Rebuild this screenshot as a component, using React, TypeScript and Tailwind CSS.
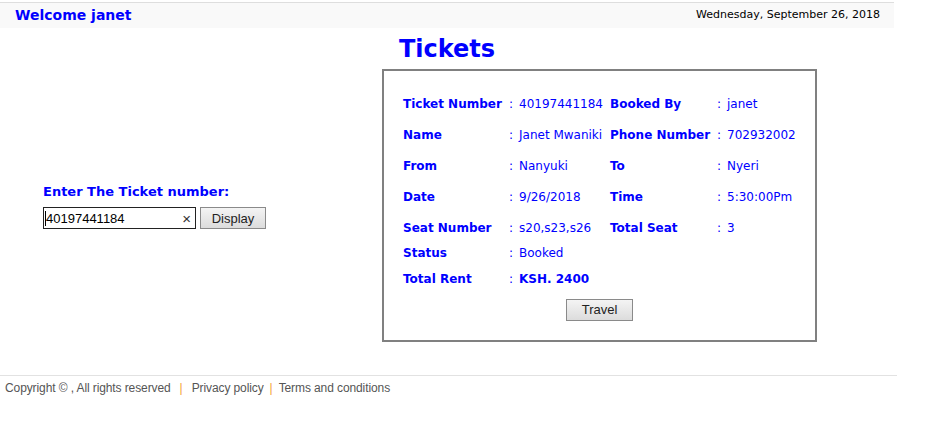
export default function App() {
  const rows: [string, string, string?, string?][] = [
    ["Ticket Number", "40197441184", "Booked By", "janet"],
    ["Name", "Janet Mwaniki", "Phone Number", "702932002"],
    ["From", "Nanyuki", "To", "Nyeri"],
    ["Date", "9/26/2018", "Time", "5:30:00Pm"],
    ["Seat Number", "s20,s23,s26", "Total Seat", "3"],
  ];

  return (
    <div className="w-[947px] h-[432px] bg-white font-['DejaVu_Sans',Verdana,sans-serif] text-[#0000ff]">
      {/* header */}
      <div className="pt-[2px]">
        <div className="w-[894px] h-[26px] border-t border-[#dedede] bg-[#f9f9f9] flex items-center justify-between pl-[15px] pr-[14px]">
          <span className="text-[14px] font-bold">Welcome janet</span>
          <span className="text-[11px] text-black">Wednesday, September 26, 2018</span>
        </div>
      </div>

      <h1 className="w-[894px] text-center text-[24px] font-bold leading-[40px] mt-[1px]">Tickets</h1>

      <div className="flex">
        {/* left form */}
        <div className="w-[382px] flex flex-col justify-center pl-[43px]">
          <div className="text-[13px] font-bold mb-[6px]">Enter The Ticket number:</div>
          <div className="flex gap-[4px]">
            <div className="w-[153px] h-[22px] border border-[#222] flex items-center justify-between pl-[1px] pr-[4px] font-['Liberation_Sans',Arial,sans-serif] text-[13px] text-black">
              <span className="flex items-center">
                <span className="w-px h-[15px] bg-black" />
                <span>40197441184</span>
              </span>
              <span className="text-[15px] text-[#333] leading-none">×</span>
            </div>
            <button className="w-[66px] h-[22px] border border-[#8a8a8a] bg-gradient-to-b from-[#f4f4f4] to-[#dcdcdc] font-['Liberation_Sans',Arial,sans-serif] text-[13px] text-[#222]">
              Display
            </button>
          </div>
        </div>

        {/* ticket box */}
        <div className="w-[435px] h-[273px] border-2 border-[#808080] pl-[19px] pt-[17px] text-[12px]">
          {rows.map(([l1, v1, l2, v2]) => (
            <div key={l1} className="flex h-[31px] items-center">
              <span className="w-[106px] font-bold">{l1}</span>
              <span className="w-[10px]">:</span>
              <span className="w-[91px] whitespace-nowrap">{v1}</span>
              <span className="w-[107px] font-bold whitespace-nowrap">{l2}</span>
              <span className="w-[10px]">:</span>
              <span>{v2}</span>
            </div>
          ))}
          <div className="flex h-[26px] items-center -mt-[3px]">
            <span className="w-[106px] font-bold">Status</span>
            <span className="w-[10px]">:</span>
            <span>Booked</span>
          </div>
          <div className="flex h-[26px] items-center">
            <span className="w-[106px] font-bold">Total Rent</span>
            <span className="w-[10px]">:</span>
            <span className="font-bold">KSH. 2400</span>
          </div>
          <div className="flex justify-center pr-[19px] mt-[7px]">
            <button className="w-[67px] h-[22px] border border-[#8a8a8a] bg-gradient-to-b from-[#f4f4f4] to-[#dcdcdc] font-['Liberation_Sans',Arial,sans-serif] text-[13px] text-[#222]">
              Travel
            </button>
          </div>
        </div>
      </div>

      {/* footer */}
      <div className="mt-[33px] w-[897px] border-t border-[#e2e2e2] pl-[5px] pt-[3px] flex items-center font-['Liberation_Sans',Arial,sans-serif] text-[12px] text-[#555] tracking-[-0.1px]">
        <span>Copyright © , All rights reserved</span>
        <span className="text-[#f5a030] px-[9px]">|</span>
        <span>Privacy policy</span>
        <span className="text-[#f5a030] px-[6px]">|</span>
        <span>Terms and conditions</span>
      </div>
    </div>
  );
}
